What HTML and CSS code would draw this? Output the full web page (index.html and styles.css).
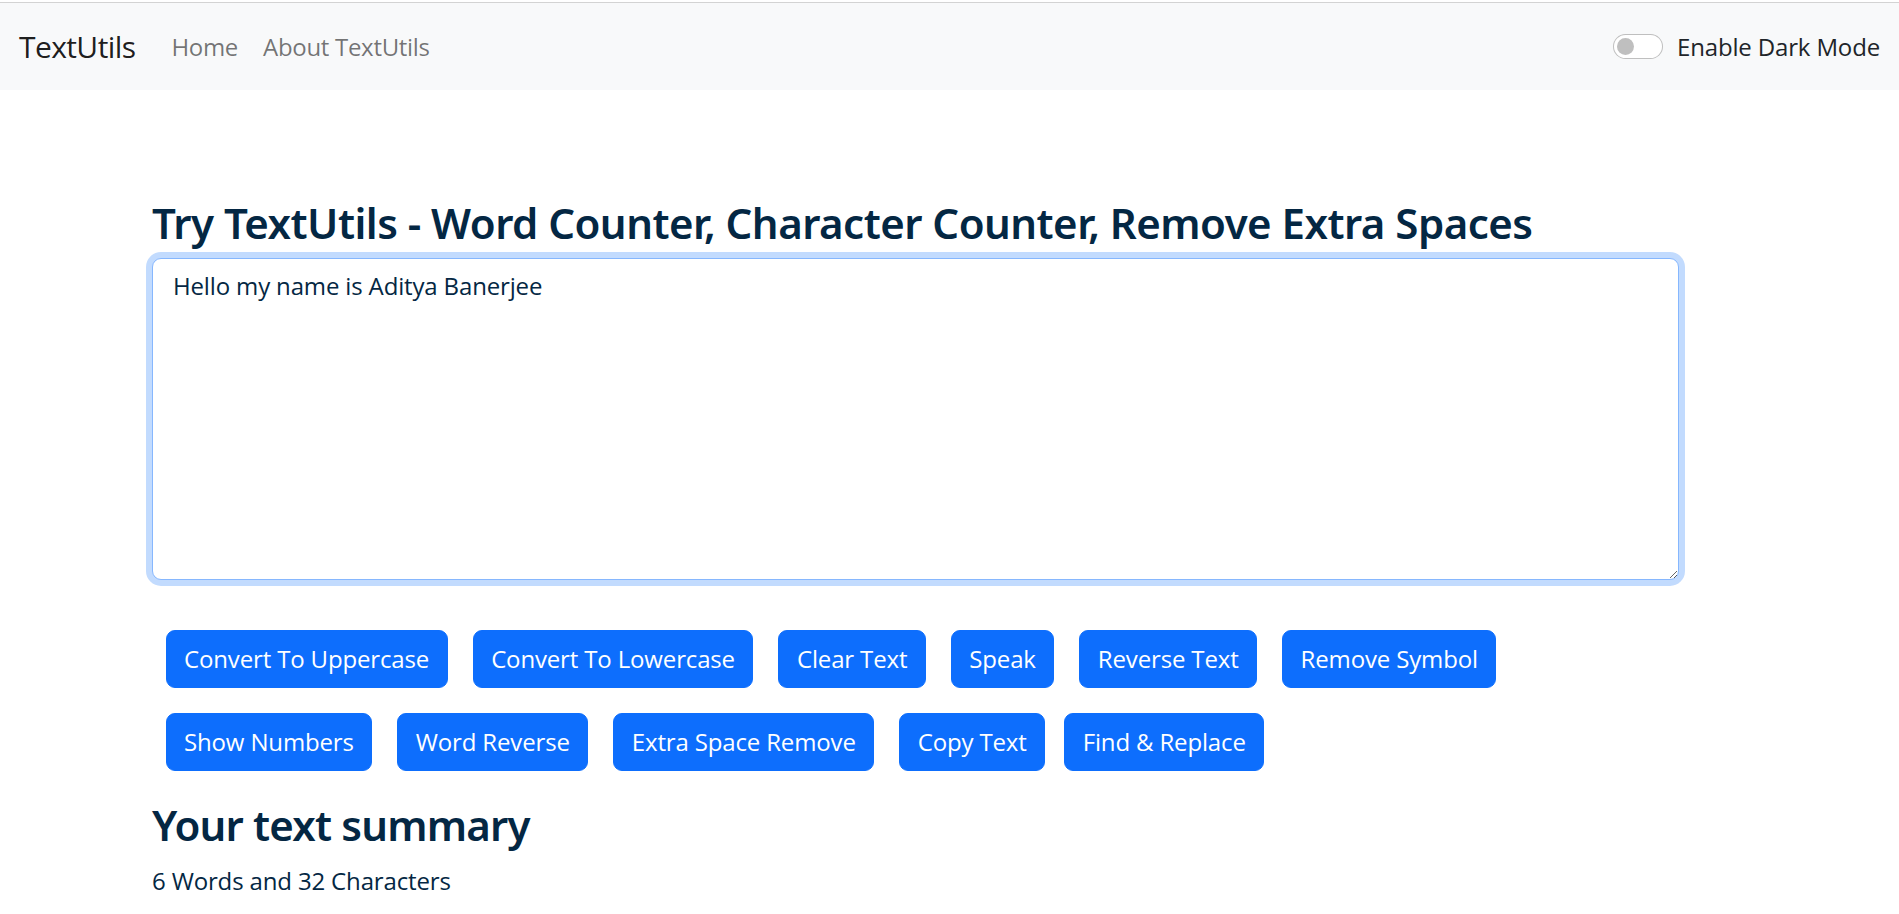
FILE: index.html
```html
<!DOCTYPE html>
<html lang="en">
<head>
<meta charset="utf-8">
<title>TextUtils</title>
<link rel="stylesheet" href="styles.css">
</head>
<body>
<div class="topline"></div>
<nav class="navbar">
  <a class="brand" href="#">TextUtils</a>
  <ul class="nav-links">
    <li><a class="nav-link" href="#">Home</a></li>
    <li><a class="nav-link" href="#">About TextUtils</a></li>
  </ul>
  <div class="switch">
    <span class="switch-track"><span class="switch-knob"></span></span>
    <label class="switch-label">Enable Dark Mode</label>
  </div>
</nav>
<main class="container">
  <h2 class="title">Try TextUtils - Word Counter, Character Counter, Remove Extra Spaces</h2>
  <textarea class="textbox" spellcheck="false">Hello my name is Aditya Banerjee</textarea>
  <div class="buttons">
    <div class="btn-row">
      <button class="btn">Convert To Uppercase</button>
      <button class="btn">Convert To Lowercase</button>
      <button class="btn">Clear Text</button>
      <button class="btn">Speak</button>
      <button class="btn">Reverse Text</button>
      <button class="btn">Remove Symbol</button>
    </div>
    <div class="btn-row">
      <button class="btn">Show Numbers</button>
      <button class="btn">Word Reverse</button>
      <button class="btn">Extra Space Remove</button>
      <button class="btn">Copy Text</button>
      <button class="btn btn-tight">Find &amp; Replace</button>
    </div>
  </div>
  <h2 class="summary-title">Your text summary</h2>
  <p class="summary">6 Words and 32 Characters</p>
</main>
</body>
</html>
```
FILE: styles.css
```css
* { box-sizing: border-box; }
html, body { margin: 0; padding: 0; background: #fff; }
body {
  font-family: "Open Sans", "Noto Sans", sans-serif;
  font-size: 24px;
  line-height: 1.5;
  letter-spacing: -0.15px;
  color: #212529;
  overflow: hidden;
}
.topline {
  height: 3px;
  border-bottom: 1px solid #d3d3d3;
}
.navbar {
  height: 87px;
  background: #f8f9fa;
  display: flex;
  align-items: center;
  padding: 0 19px;
}
.brand {
  font-size: 30px;
  letter-spacing: -0.6px;
  color: rgba(0, 0, 0, .9);
  text-decoration: none;
  margin-right: 36px;
}
.nav-links {
  list-style: none;
  margin: 0;
  padding: 0;
  display: flex;
  gap: 25px;
}
.nav-link {
  color: rgba(0, 0, 0, .55);
  letter-spacing: -0.3px;
  text-decoration: none;
}
.switch {
  margin-left: auto;
  display: flex;
  align-items: center;
}
.switch-track {
  width: 50px;
  height: 25px;
  border: 1.5px solid rgba(0, 0, 0, .25);
  border-radius: 13px;
  background: #fff;
  display: flex;
  align-items: center;
  padding-left: 3px;
  margin-right: 14px;
}
.switch-knob {
  width: 17px;
  height: 17px;
  border-radius: 50%;
  background: #bfbfbf;
}
.switch-label { color: #212529; }

.container {
  margin-left: 152px;
  width: 1527px;
  padding-top: 108px;
}
.title {
  font-family: "Noto Sans", "Open Sans", sans-serif;
  font-size: 42px;
  font-weight: 600;
  letter-spacing: -0.52px;
  line-height: 1.2;
  color: #042743;
  margin: 0 0 10px;
  white-space: nowrap;
}
.textbox {
  display: block;
  width: 100%;
  height: 322px;
  font-family: inherit;
  font-size: 24px;
  letter-spacing: -0.15px;
  line-height: 1.5;
  color: #042743;
  padding: 9px 20px;
  border: 1.5px solid #86b7fe;
  border-radius: 9px;
  box-shadow: 0 0 0 6px rgba(13, 110, 253, .25);
  outline: none;
  resize: vertical;
  margin: 0;
}
.buttons {
  display: flex;
  flex-direction: column;
  gap: 25px;
  padding: 50px 0 0 13.5px;
}
.btn-row {
  display: flex;
  gap: 25px;
}
.btn {
  font-family: inherit;
  font-size: 24px;
  letter-spacing: -0.15px;
  line-height: 36px;
  color: #fff;
  background: #0d6efd;
  border: 1.5px solid #0d6efd;
  border-radius: 9px;
  padding: 10px 17.5px;
  cursor: pointer;
}
.btn-tight { margin-left: -6px; }
.summary-title {
  font-family: "Noto Sans", "Open Sans", sans-serif;
  font-size: 42px;
  font-weight: 600;
  letter-spacing: -0.8px;
  line-height: 1.2;
  color: #042743;
  margin: 29px 0 12px;
}
.summary {
  margin: 0;
  color: #042743;
}
```
